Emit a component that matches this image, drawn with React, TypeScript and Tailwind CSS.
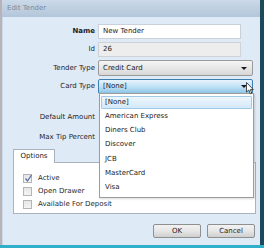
import { ReactNode } from 'react'

const font = { fontFamily: '"DejaVu Sans", Verdana, sans-serif' }

function Row({ label, bold, children, className }: { label: string; bold?: boolean; children?: ReactNode; className?: string }) {
  return (
    <div className={`flex items-center ${className ?? ''}`}>
      <div className={`w-[95px] shrink-0 pr-[3px] text-right text-[7px] text-[#1e1e1e] ${bold ? 'font-bold' : ''}`}>{label}</div>
      {children}
    </div>
  )
}

function Arrow() {
  return <div className="ml-auto mr-[5px] size-0 border-x-[3px] border-t-[3px] border-x-transparent border-t-[#1a1a1a]" />
}

function Check({ checked, label }: { checked?: boolean; label: string }) {
  return (
    <div className="flex h-[13px] items-center gap-[6px]">
      <div className="relative size-[9px] border border-[#b5b5b5] bg-gradient-to-b from-[#e6e6e6] to-[#f4f4f4]">
        {checked && (
          <svg viewBox="0 0 9 9" className="absolute left-0 top-[-1px] size-[9px]">
            <path d="M1.5 4.5 L3.5 7 L7.5 1" fill="none" stroke="#5a6fa8" strokeWidth="1.3" />
          </svg>
        )}
      </div>
      <span className="text-[7px] text-[#2a2a2a]">{label}</span>
    </div>
  )
}

const cards = ['American Express', 'Diners Club', 'Discover', 'JCB', 'MasterCard', 'Visa']

export default function App() {
  return (
    <div className="relative h-[248px] w-[264px] overflow-hidden bg-[#1d4a5a]" style={font}>
      <div className="flex h-[245px] w-[260px] flex-col border-l-2 border-[#b9b3b8] bg-[#c9d9eb]">
        {/* Title */}
        <div className="flex h-[17px] items-center bg-gradient-to-b from-[#cbd9e8] to-[#b3c6da] pl-[5px] text-[7px] text-[#7d8a99]">
          Edit Tender
        </div>

        {/* Body */}
        <div className="relative ml-[1px] flex flex-1 flex-col bg-[#dfeaf7] pt-[7px]">
          <Row label="Name" bold>
            <div className="flex h-[15px] w-[143px] items-center border border-[#c9d0d8] bg-white pl-[4px] text-[7px] text-[#222]">New Tender</div>
          </Row>
          <Row label="Id" className="mt-[3px]">
            <div className="flex h-[15px] w-[143px] items-center border border-[#cfd3d7] bg-[#ededed] pl-[4px] text-[7px] text-[#222]">26</div>
          </Row>
          <Row label="Tender Type" className="mt-[3px]">
            <div className="flex h-[16px] w-[155px] items-center rounded-[2px] border border-[#9a9a9a] bg-gradient-to-b from-[#f5f5f5] to-[#d8d8d8] pl-[4px] text-[7px] text-[#222]">
              Credit Card
              <Arrow />
            </div>
          </Row>
          <Row label="Card Type" className="mt-[3px]">
            <div className="flex h-[15px] w-[155px] items-center rounded-[2px] border border-[#3d7fb0] bg-gradient-to-b from-[#e8f4fc] via-[#c2e2f6] to-[#8dc5e6] pl-[4px] text-[7px] text-[#222]">
              [None]
              <Arrow />
            </div>
          </Row>
          <Row label="Default Amount" className="mt-[16px] h-[14px]" />
          <Row label="Max Tip Percent" className="mt-[6px] h-[14px]" />

          {/* Options tab */}
          <div className="ml-[10px] mt-[5px] w-[243px]">
            <div className="relative z-10 -mb-px flex h-[14px] w-[42px] items-center justify-center border border-b-0 border-[#a9b2bd] bg-white text-[7px] text-[#222]">
              Options
            </div>
            <div className="flex h-[52px] flex-col border border-[#a9b2bd] bg-white pl-[9px] pt-[9px]">
              <Check checked label="Active" />
              <Check label="Open Drawer" />
              <Check label="Available For Deposit" />
            </div>
          </div>

          {/* Buttons */}
          <div className="mt-[10px] flex justify-end gap-[6px] pr-[5px]">
            {['OK', 'Cancel'].map(b => (
              <div key={b} className="flex h-[14px] w-[48px] items-center justify-center rounded-[2px] border border-[#8e8f8f] bg-gradient-to-b from-[#f2f2f2] via-[#e6e6e6] to-[#cfcfcf] text-[7px] text-[#222]">
                {b}
              </div>
            ))}
          </div>

          {/* Dropdown list */}
          <div className="absolute left-[96px] top-[76px] z-20 w-[155px] border border-[#9c9c9c] bg-white px-[1px] pb-[2px] pt-[2px] shadow-[1px_1px_2px_rgba(0,0,0,0.15)]">
            <div className="flex h-[13px] items-center rounded-[1px] border border-[#9fcbe8] bg-gradient-to-b from-[#eef6fd] to-[#d3e8f8] pl-[3px] text-[7px] text-[#222]">
              [None]
            </div>
            {cards.map(c => (
              <div key={c} className="flex h-[14.3px] items-center pl-[4px] text-[7px] text-[#222]">
                {c}
              </div>
            ))}
          </div>

          {/* Cursor */}
          <svg viewBox="0 0 8 13" className="absolute left-[243px] top-[65px] z-30 h-[13px] w-[8px]">
            <path d="M0.5 0.5 L0.5 10 L2.8 8 L4.3 11.8 L5.8 11.2 L4.3 7.6 L7.3 7.6 Z" fill="white" stroke="#222" strokeWidth="0.8" />
          </svg>
        </div>
      </div>
      <div className="absolute bottom-0 left-0 h-[3px] w-full bg-[#2fb0c8]" />
    </div>
  )
}
